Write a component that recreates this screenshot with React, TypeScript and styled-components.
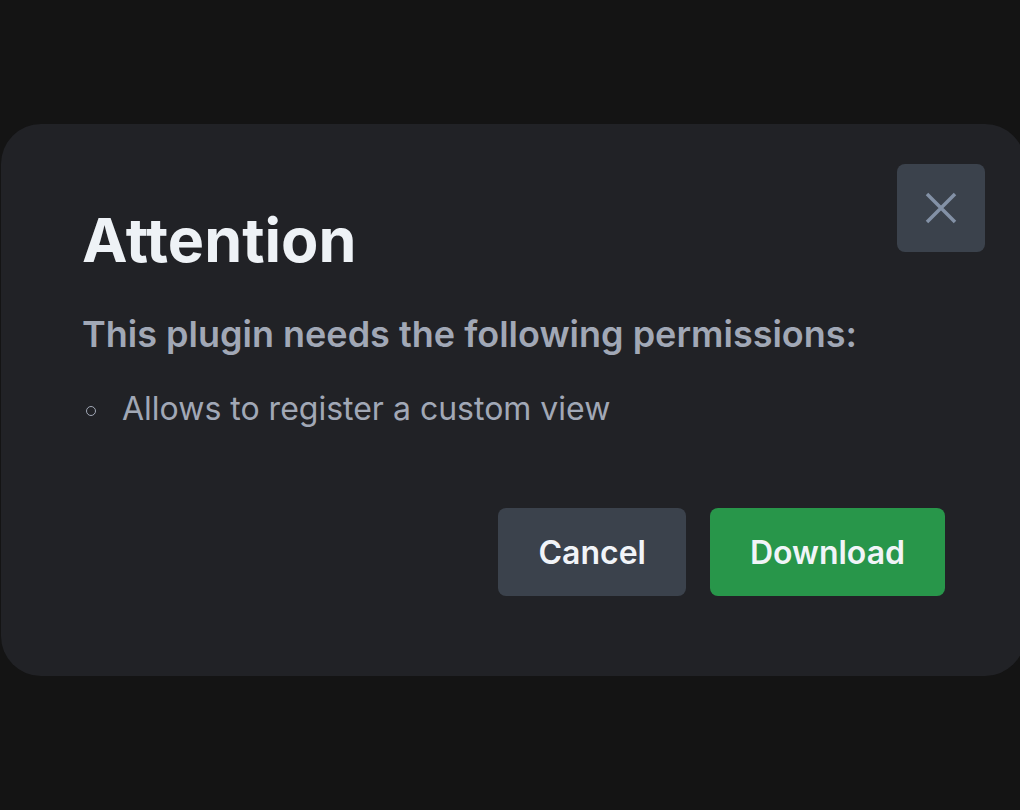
import React from "react";
import styled, { createGlobalStyle } from "styled-components";

const Global = createGlobalStyle`
  html, body {
    margin: 0;
    padding: 0;
    background: #141414;
    overflow: hidden;
  }
  body {
    width: 1020px;
    height: 810px;
    font-family: Inter, "Noto Sans", sans-serif;
  }
`;

const Page = styled.div`
  display: flex;
  align-items: flex-start;
  padding: 124px 0 0 1px;
  width: 1020px;
  height: 810px;
  box-sizing: border-box;
`;

const Modal = styled.section`
  position: relative;
  flex: none;
  width: 1024px;
  height: 552px;
  box-sizing: border-box;
  padding: 80px 80px 80px 81px;
  background: #212226;
  border-radius: 40px;
  display: flex;
  flex-direction: column;
`;

const CloseButton = styled.button`
  position: absolute;
  top: 40px;
  right: 40px;
  width: 88px;
  height: 88px;
  border: none;
  border-radius: 8px;
  background: #3b424c;
  display: flex;
  align-items: center;
  justify-content: center;
  padding: 0;
  cursor: pointer;
`;

const Title = styled.h1`
  margin: 0;
  font-size: 61px;
  line-height: 72px;
  font-weight: 700;
  color: #eef2f6;
  font-feature-settings: "liga" 0, "calt" 0;
`;

const Subtitle = styled.h2`
  margin: 34px 0 0;
  font-size: 36px;
  line-height: 48px;
  font-weight: 600;
  color: #a1a8b6;
`;

const List = styled.ul`
  margin: 27px 0 0;
  padding: 0;
  list-style: none;
  color: #a1a8b6;
`;

const Item = styled.li`
  display: flex;
  align-items: center;
  font-size: 32px;
  line-height: 48px;
  font-weight: 400;

  &::before {
    content: "";
    flex: none;
    width: 8px;
    height: 8px;
    margin: 4px 26px 0 4px;
    border: 1.5px solid #a1a8b6;
    border-radius: 50%;
  }
`;

const Actions = styled.div`
  margin-top: auto;
  display: flex;
  justify-content: flex-end;
  gap: 24px;
`;

const Button = styled.button<{ $primary?: boolean }>`
  height: 88px;
  padding: 0 40px;
  border: none;
  border-radius: 8px;
  font-family: Inter, "Noto Sans", sans-serif;
  font-size: 32px;
  font-weight: 600;
  color: #f1f4f8;
  background: ${(p) => (p.$primary ? "#28964a" : "#3b424c")};
  cursor: pointer;
`;

export default function App() {
  return (
    <>
      <Global />
      <Page>
        <Modal>
          <CloseButton aria-label="Close">
            <svg width="32" height="32" viewBox="0 0 32 32" fill="none">
              <path d="M2 2 L30 30 M30 2 L2 30" stroke="#8391a6" strokeWidth="3.5" strokeLinecap="butt" />
            </svg>
          </CloseButton>
          <Title>Attention</Title>
          <Subtitle>This plugin needs the following permissions:</Subtitle>
          <List>
            <Item>Allows to register a custom view</Item>
          </List>
          <Actions>
            <Button>Cancel</Button>
            <Button $primary>Download</Button>
          </Actions>
        </Modal>
      </Page>
    </>
  );
}
